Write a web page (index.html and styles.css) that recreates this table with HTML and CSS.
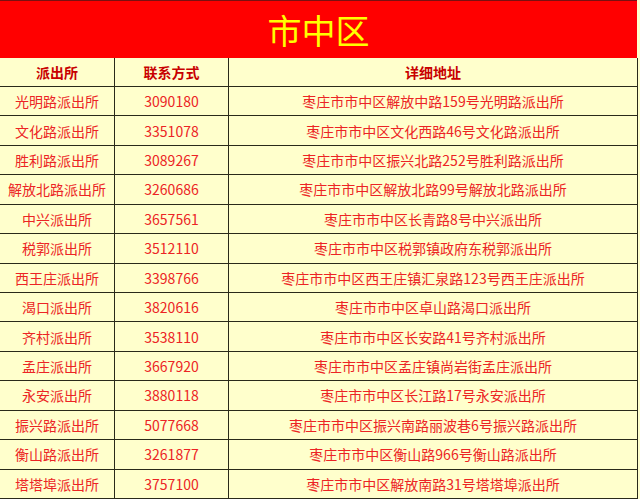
FILE: index.html
```html
<!DOCTYPE html>
<html lang="zh">
<head>
<meta charset="utf-8">
<link rel="stylesheet" href="styles.css">
</head>
<body>
<div class="page">
  <div class="title">市中区</div>
  <div class="grid">
    <div class="cell head">派出所</div><div class="cell head">联系方式</div><div class="cell head">详细地址</div>
    <div class="cell">光明路派出所</div><div class="cell">3090180</div><div class="cell">枣庄市市中区解放中路159号光明路派出所</div>
    <div class="cell">文化路派出所</div><div class="cell">3351078</div><div class="cell">枣庄市市中区文化西路46号文化路派出所</div>
    <div class="cell">胜利路派出所</div><div class="cell">3089267</div><div class="cell">枣庄市市中区振兴北路252号胜利路派出所</div>
    <div class="cell">解放北路派出所</div><div class="cell">3260686</div><div class="cell">枣庄市市中区解放北路99号解放北路派出所</div>
    <div class="cell">中兴派出所</div><div class="cell">3657561</div><div class="cell">枣庄市市中区长青路8号中兴派出所</div>
    <div class="cell">税郭派出所</div><div class="cell">3512110</div><div class="cell">枣庄市市中区税郭镇政府东税郭派出所</div>
    <div class="cell">西王庄派出所</div><div class="cell">3398766</div><div class="cell">枣庄市市中区西王庄镇汇泉路123号西王庄派出所</div>
    <div class="cell">渴口派出所</div><div class="cell">3820616</div><div class="cell">枣庄市市中区卓山路渴口派出所</div>
    <div class="cell">齐村派出所</div><div class="cell">3538110</div><div class="cell">枣庄市市中区长安路41号齐村派出所</div>
    <div class="cell">孟庄派出所</div><div class="cell">3667920</div><div class="cell">枣庄市市中区孟庄镇尚岩街孟庄派出所</div>
    <div class="cell">永安派出所</div><div class="cell">3880118</div><div class="cell">枣庄市市中区长江路17号永安派出所</div>
    <div class="cell">振兴路派出所</div><div class="cell">5077668</div><div class="cell">枣庄市市中区振兴南路丽波巷6号振兴路派出所</div>
    <div class="cell">衡山路派出所</div><div class="cell">3261877</div><div class="cell">枣庄市市中区衡山路966号衡山路派出所</div>
    <div class="cell">塔塔埠派出所</div><div class="cell">3757100</div><div class="cell">枣庄市市中区解放南路31号塔塔埠派出所</div>
  </div>
</div>
</body>
</html>
```

FILE: styles.css
```css
html, body {
  margin: 0;
  padding: 0;
  background: #ffffcc;
}
.page {
  width: 640px;
  height: 499px;
  overflow: hidden;
  display: flex;
  flex-direction: column;
}
.title {
  height: 57px;
  border-top: 1px solid #7a1010;
  width: 637px;
  background: #ff0000;
  color: #ffff00;
  font-family: "Noto Sans CJK SC", sans-serif;
  font-size: 34px;
  display: flex;
  align-items: center;
  justify-content: center;
}
.grid {
  width: 637px;
  height: 441px;
  padding-right: 1px;
  padding-bottom: 1px;
  background: #2a2a1a;
  display: grid;
  grid-template-columns: 114px 113px 408px;
  grid-template-rows: 28px repeat(14, 1fr);
  gap: 1px;
  box-sizing: content-box;
}
.cell {
  background: #ffffcc;
  color: #ec2424;
  font-family: "Liberation Sans Narrow", "Noto Sans CJK SC", sans-serif;
  font-size: 14px;
  display: flex;
  align-items: center;
  justify-content: center;
  white-space: nowrap;
}
.head {
  color: #c80000;
  font-weight: bold;
  font-family: "Noto Sans CJK SC", sans-serif;
}
```
